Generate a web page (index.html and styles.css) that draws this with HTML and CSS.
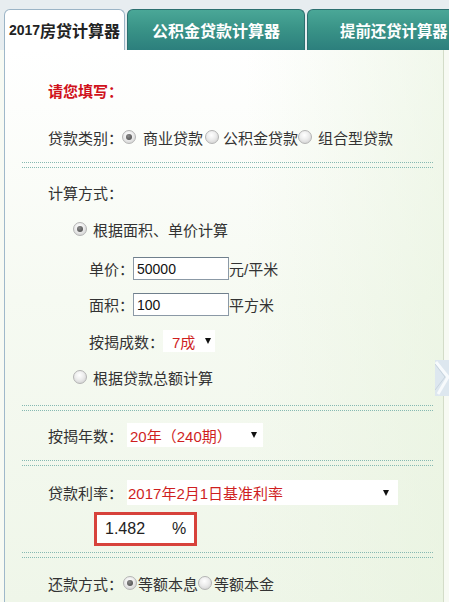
FILE: index.html
```html
<!DOCTYPE html>
<html lang="zh-CN">
<head>
<meta charset="utf-8">
<title>2017房贷计算器</title>
<link rel="stylesheet" href="styles.css">
</head>
<body>
<div class="top">
  <div class="tabs">
    <div class="tab active"><span class="num">2017</span>房贷计算器</div>
    <div class="tab">公积金贷款计算器</div>
    <div class="tab tab-last">提前还贷计算器</div>
  </div>
</div>
<div class="panel">
  <div class="row title">请您填写：</div>
  <div class="row r-type">
    <span class="lbl">贷款类别：</span>
    <span class="radio on t1"></span><span class="opt o1">商业贷款</span>
    <span class="radio t2"></span><span class="opt o2">公积金贷款</span>
    <span class="radio t3"></span><span class="opt o3">组合型贷款</span>
  </div>
  <div class="sep s1"></div>
  <div class="row r-mode">计算方式：</div>
  <div class="row r-radio r-area"><span class="radio on"></span><span class="rtext">根据面积、单价计算</span></div>
  <div class="row sub r-price"><span class="lbl">单价：</span><span class="input">50000</span><span>元/平米</span></div>
  <div class="row sub r-size"><span class="lbl">面积：</span><span class="input">100</span><span>平方米</span></div>
  <div class="row sub r-ratio"><span class="lbl">按揭成数：</span><span class="select sel-ratio"><span class="val">7成</span><span class="tri"></span></span></div>
  <div class="row r-radio r-total"><span class="radio"></span><span class="rtext">根据贷款总额计算</span></div>
  <div class="sep s2"></div>
  <div class="row r-years"><span class="lbl">按揭年数：</span><span class="select sel-years"><span class="val">20年（240期）</span><span class="tri"></span></span></div>
  <div class="sep s3"></div>
  <div class="row r-rate"><span class="lbl">贷款利率：</span><span class="select sel-rate"><span class="val">2017年2月1日基准利率</span><span class="tri"></span></span></div>
  <div class="ratebox"><span class="rateval">1.482</span><span class="pct">%</span></div>
  <div class="sep s4"></div>
  <div class="row r-pay">
    <span class="lbl">还款方式：</span>
    <span class="radio on p1"></span><span class="opt q1">等额本息</span>
    <span class="radio p2"></span><span class="opt q2">等额本金</span>
  </div>
  <div class="side-arrow">
    <svg width="14" height="36" viewBox="0 0 14 36">
      <path d="M0 0 H14 V36 H0 Z" fill="#dde7ef"/>
      <path d="M1 2 L13 17 L3 34" fill="none" stroke="#f7fafc" stroke-width="3"/>
      <path d="M0 4 L10 17 L0 30" fill="none" stroke="#c7d3dd" stroke-width="1"/>
    </svg>
  </div>
</div>
</body>
</html>
```

FILE: styles.css
```css
html, body {
  margin: 0;
  padding: 0;
}
body {
  width: 449px;
  height: 602px;
  overflow: hidden;
  background: #f7faf3;
  font-family: "Liberation Sans", "Noto Sans CJK SC", sans-serif;
  font-size: 15px;
  color: #333;
}
.top {
  background: #e7edf0;
  height: 50px;
  padding-top: 9px;
  box-sizing: border-box;
}
.tabs {
  display: flex;
  height: 41px;
  padding-left: 4px;
  gap: 2px;
  width: 600px;
}
.tab {
  flex: none;
  width: 178px;
  box-sizing: border-box;
  border: 1px solid #2b6f6f;
  border-bottom: none;
  border-radius: 6px 6px 0 0;
  background: linear-gradient(to bottom, #4aa797 0%, #3a9488 45%, #2c7f7d 100%);
  color: #fff;
  font-weight: bold;
  font-size: 16px;
  display: flex;
  align-items: center;
  justify-content: center;
  letter-spacing: 0;
}
.tab-last {
  justify-content: flex-start;
  padding-left: 32px;
  font-size: 15.4px;
}
.tab.active {
  width: 121px;
  background: #fff;
  color: #222;
  border: 1px solid #9bb4c6;
  border-bottom: none;
}
.num {
  font-size: 14px;
}
.panel {
  position: relative;
  margin-left: 4px;
  width: 440px;
  height: 552px;
  box-sizing: border-box;
  border-left: 1px solid #9fb8ca;
  border-right: 1px solid #d3dcc8;
  background:
    linear-gradient(to right, rgba(255,255,255,0) 55%, rgba(230,242,220,0.55) 100%),
    linear-gradient(to bottom, #ffffff 0%, #f6faf2 45%, #eff6e9 100%);
  padding-top: 28px;
}
.row {
  display: flex;
  align-items: center;
  height: 24px;
  padding-left: 43px;
  white-space: nowrap;
}
.title {
  color: #d0121b;
  font-weight: bold;
}
.r-type { margin-top: 23px; }
.sep {
  height: 4px;
  margin: 0 10px 0 17px;
  border-top: 1px dotted #86b9b2;
  border-bottom: 1px dotted #86b9b2;
}
.s1 { margin-top: 13px; }
.s2 { margin-top: 16px; }
.s3 { margin-top: 13px; }
.s4 { margin-top: 6px; }
.r-mode { margin-top: 12px; }
.r-radio { padding-left: 68px; }
.r-area { margin-top: 13px; }
.r-total { margin-top: 13px; }
.rtext { margin-left: 6px; }
.sub { padding-left: 84px; }
.r-price { margin-top: 16px; height: 23px; }
.r-size { margin-top: 13px; height: 23px; }
.r-ratio { margin-top: 14px; height: 22px; }
.r-years { margin-top: 12px; }
.r-rate { margin-top: 14px; height: 25px; }
.r-pay { margin-top: 13px; }

.radio {
  flex: none;
  display: inline-block;
  width: 14px;
  height: 14px;
  box-sizing: border-box;
  border-radius: 50%;
  border: 1px solid #b4b4b4;
  background: radial-gradient(circle at 45% 35%, #ffffff 0%, #ececec 45%, #c9c9c9 100%);
  position: relative;
}
.radio.on::after {
  content: "";
  position: absolute;
  left: 3px;
  top: 3px;
  width: 6px;
  height: 6px;
  border-radius: 50%;
  background: radial-gradient(circle at 40% 35%, #8a8a8a 0%, #444 100%);
}
.t1 { margin-left: -1px; margin-right: 7px; }
.t2 { margin-left: 2px; margin-right: 4px; }
.t3 { margin-left: 0; margin-right: 6px; }
.p1 { margin-left: 0; margin-right: 1px; }
.p2 { margin-left: 0; margin-right: 2px; }

.input {
  display: flex;
  align-items: center;
  box-sizing: border-box;
  width: 96px;
  height: 23px;
  margin-left: -1px;
  padding-left: 3px;
  background: #fff;
  border: 1px solid #8b99a6;
  border-top-color: #6f7f8c;
  color: #111;
  font-size: 14px;
}
.select {
  display: flex;
  align-items: center;
  height: 100%;
  box-sizing: border-box;
  background: #fff;
  color: #cf1f1f;
}
.tri {
  margin-left: auto;
  width: 0;
  height: 0;
  border-left: 3px solid transparent;
  border-right: 3px solid transparent;
  border-top: 6px solid #111;
}
.sel-ratio { width: 52px; margin-left: -1px; padding-left: 9px; padding-right: 4px; }
.sel-years { width: 136px; margin-left: 4px; padding-left: 3px; padding-right: 6px; }
.sel-rate { width: 271px; margin-left: 4px; padding-left: 1px; padding-right: 9px; }

.ratebox {
  display: flex;
  align-items: center;
  box-sizing: border-box;
  width: 103px;
  height: 34px;
  margin: 7px 0 0 89px;
  border: 3px solid #d7423b;
  background: #fff;
  padding-left: 8px;
  color: #222;
  font-size: 16px;
}
.pct {
  margin-left: 27px;
}
.side-arrow {
  position: absolute;
  left: 430px;
  top: 310px;
  width: 14px;
  height: 36px;
}
.side-arrow svg {
  display: block;
}
```
